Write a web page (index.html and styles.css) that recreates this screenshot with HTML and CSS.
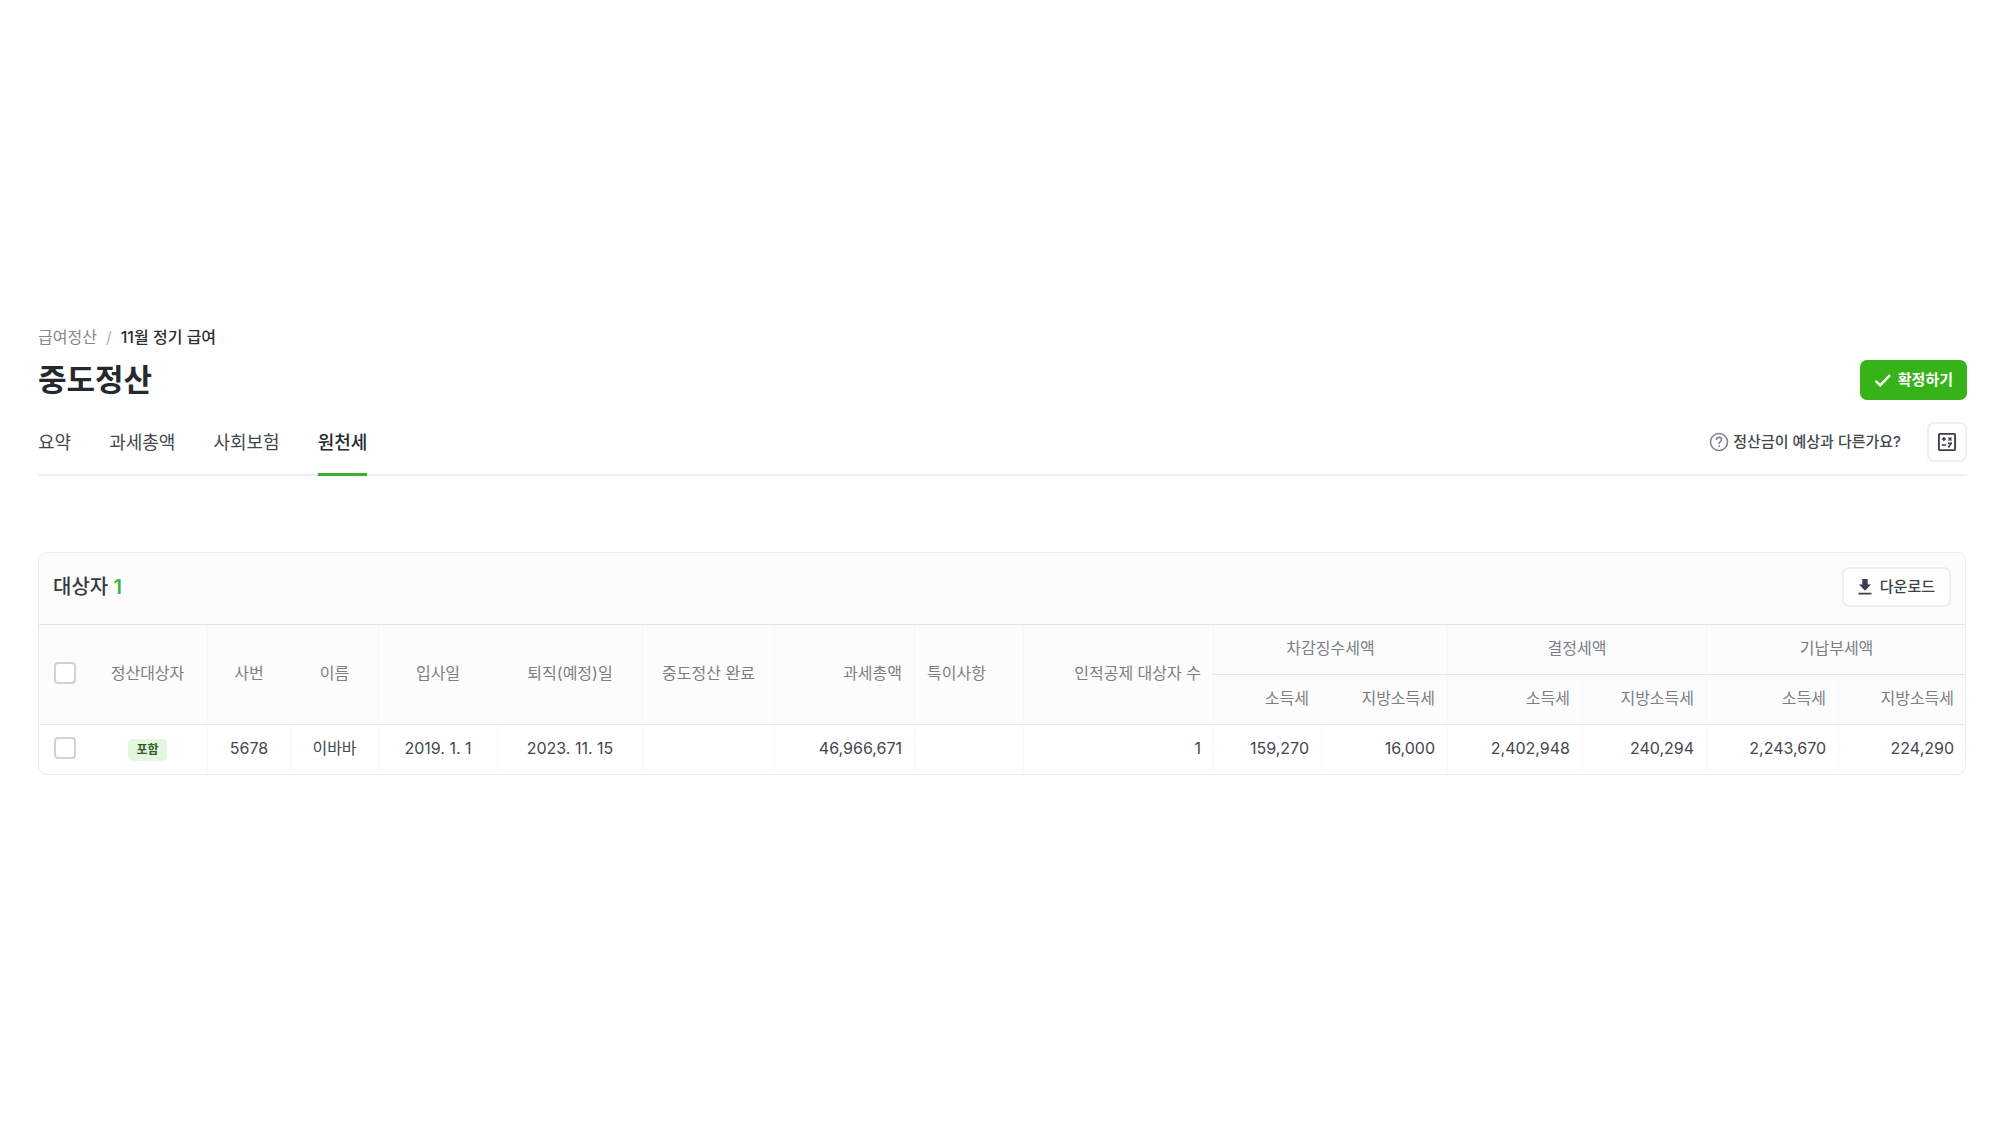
FILE: index.html
```html
<!DOCTYPE html>
<html lang="ko">
<head>
<meta charset="utf-8">
<meta name="viewport" content="width=device-width, initial-scale=1">
<title>중도정산</title>
<link rel="stylesheet" href="styles.css">
</head>
<body>
<main class="page">
  <nav class="breadcrumb" aria-label="경로">
    <a href="#">급여정산</a>
    <span class="slash">/</span>
    <span class="current">11월 정기 급여</span>
  </nav>
  <header class="title-row">
    <h1>중도정산</h1>
    <button class="btn btn-primary" type="button">
      <svg width="18" height="18" viewBox="0 0 18 18" aria-hidden="true"><path d="M1.600 9.800l4.600 4.500L16 4.200" fill="none" stroke="currentColor" stroke-width="2.400"/></svg>
      확정하기
    </button>
  </header>
  <div class="tab-row">
    <nav class="tabs" aria-label="정산 메뉴">
      <a href="#">요약</a>
      <a href="#">과세총액</a>
      <a href="#">사회보험</a>
      <a href="#" class="active" aria-current="page">원천세</a>
    </nav>
    <div class="tools">
      <a class="help" href="#">
        <svg width="20" height="20" viewBox="0 0 20 20" fill="none" stroke="currentColor" stroke-width="1.600" aria-hidden="true"><circle cx="10" cy="10" r="8.500"/><path d="M7.400 8.100c0-1.700 1.100-2.700 2.600-2.700s2.600 1 2.600 2.400c0 1.800-2.500 2-2.500 4.100"/><path d="M10.100 13.200v1.700"/></svg>
        정산금이 예상과 다른가요?
      </a>
      <button class="btn btn-icon" type="button" aria-label="계산기">
        <svg width="20" height="20" viewBox="0 0 20 20" fill="none" stroke="currentColor" aria-hidden="true"><rect x="1.900" y="1.900" width="16.200" height="16.200" rx="1" stroke-width="1.900"/><path d="M4.800 7h4.200M6.900 4.900v4.200M11.500 5.500l3 3M14.500 5.500l-3 3M4.800 13h4.400M11 11.300h4M11.200 14.900l3.400-3.600M11 14.900h2" stroke-width="1.400"/></svg>
      </button>
    </div>
  </div>

  <section class="card">
    <header class="card-head">
      <h2>대상자 <span class="count">1</span></h2>
      <button class="btn btn-outline" type="button">
        <svg width="14" height="18" viewBox="0 0 14 18" fill="currentColor" aria-hidden="true"><path d="M4.300 1h5.400v5.600H13L7 12.800 1 6.600h3.300zM.5 14.800h13v1.600H.5z"/></svg>
        다운로드
      </button>
    </header>
    <table>
      <colgroup>
        <col class="w-check"><col class="w-target"><col class="w-no"><col class="w-name">
        <col class="w-join"><col class="w-leave"><col class="w-done"><col class="w-total">
        <col class="w-note"><col class="w-people"><col class="w-tax-a"><col class="w-local-a">
        <col class="w-tax-b"><col class="w-local-b"><col class="w-tax-c"><col class="w-local-c">
      </colgroup>
      <thead>
        <tr>
          <th rowspan="2" class="check plain"><input type="checkbox" aria-label="전체 선택"></th>
          <th rowspan="2" class="plain">정산대상자</th>
          <th rowspan="2">사번</th>
          <th rowspan="2" class="plain">이름</th>
          <th rowspan="2">입사일</th>
          <th rowspan="2" class="plain">퇴직(예정)일</th>
          <th rowspan="2">중도정산 완료</th>
          <th rowspan="2" class="num">과세총액</th>
          <th rowspan="2" class="left">특이사항</th>
          <th rowspan="2" class="num">인적공제 대상자 수</th>
          <th colspan="2">차감징수세액</th>
          <th colspan="2">결정세액</th>
          <th colspan="2">기납부세액</th>
        </tr>
        <tr>
          <th class="num">소득세</th>
          <th class="num plain">지방소득세</th>
          <th class="num">소득세</th>
          <th class="num">지방소득세</th>
          <th class="num">소득세</th>
          <th class="num">지방소득세</th>
        </tr>
      </thead>
      <tbody>
        <tr>
          <td class="check plain"><input type="checkbox" aria-label="이바바 선택"></td>
          <td class="plain"><span class="badge">포함</span></td>
          <td>5678</td>
          <td>이바바</td>
          <td>2019. 1. 1</td>
          <td>2023. 11. 15</td>
          <td></td>
          <td class="num">46,966,671</td>
          <td class="left"></td>
          <td class="num">1</td>
          <td class="num">159,270</td>
          <td class="num">16,000</td>
          <td class="num">2,402,948</td>
          <td class="num">240,294</td>
          <td class="num">2,243,670</td>
          <td class="num">224,290</td>
        </tr>
      </tbody>
    </table>
  </section>
</main>
</body>
</html>
```
FILE: styles.css
```css
* { box-sizing: border-box; }

body {
  margin: 0;
  background: #fff;
  color: #43474f;
  font-family: Inter, "Noto Sans CJK KR", sans-serif;
  font-size: 16px;
  line-height: 24px;
}

a { color: inherit; text-decoration: none; }
h1, h2 { margin: 0; }
svg { display: block; flex: none; }

.page { padding: 325px 33px 40px 38px; }

/* Page heading */
.breadcrumb { display: flex; gap: 9px; color: #84878d; }
.breadcrumb .slash { color: #b0b3b8; }
.breadcrumb .current { color: #2b2f36; font-weight: 500; }

.title-row {
  display: flex;
  align-items: center;
  justify-content: space-between;
  margin-top: 11px;
}
h1 { color: #24292f; font-size: 31px; line-height: 40px; font-weight: 700; }

/* Buttons */
.btn {
  display: flex;
  align-items: center;
  justify-content: center;
  gap: 6px;
  height: 40px;
  padding: 0 14px;
  border: 2px solid #efeff1;
  border-radius: 7px;
  background: #fff;
  color: #3a3f4a;
  font: inherit;
  font-size: 15px;
  font-weight: 500;
}
.btn-primary { border: 0; background: #37b31a; color: #fff; font-weight: 700; }
.btn-icon { width: 40px; padding: 0; }
.btn-outline { gap: 8px; }

/* Tabs */
.tab-row {
  display: flex;
  justify-content: space-between;
  height: 76px;
  border-bottom: 2px solid #efeff0;
}
.tabs { display: flex; gap: 38px; font-size: 18px; }
.tabs a {
  padding-top: 31px;
  margin-bottom: -2px;
  border-bottom: 3px solid transparent;
}
.tabs .active { border-color: #3bb02c; color: #24292f; font-weight: 500; }
.tools { display: flex; align-items: center; gap: 26px; padding-top: 10px; }
.help { display: flex; align-items: center; gap: 4px; font-size: 15px; font-weight: 500; }
.help svg { color: #84878d; }

/* Table card */
.card {
  margin: 76px 1px 0 0;
  overflow: hidden;
  border: 1px solid #ececee;
  border-radius: 9px;
}
.card-head {
  display: flex;
  align-items: center;
  justify-content: space-between;
  height: 72px;
  padding: 0 14px 4px;
  border-bottom: 1px solid #e6e6e8;
  background: #fcfcfc;
}
h2 { color: #363a42; font-size: 20px; line-height: 24px; font-weight: 500; }
.count { color: #3bb53b; font-weight: 600; }

table { width: 100%; table-layout: fixed; border-collapse: separate; border-spacing: 0; }
th, td {
  height: 49px;
  padding: 0 12px 3px;
  border-left: 1px solid #f7f7f9;
  text-align: center;
  white-space: nowrap;
}
th {
  height: 50px;
  border-bottom: 1px solid #e6e6e8;
  background: #fcfcfc;
  color: #7b7e86;
  font-weight: 400;
}
.plain { border-left-color: transparent; }
.check { padding: 0 14px 3px; text-align: left; }
.left { text-align: left; }
.num { text-align: right; }

input[type="checkbox"] {
  display: block;
  width: 22px;
  height: 22px;
  margin: 0;
  appearance: none;
  border: 2px solid #d2d2d4;
  border-radius: 4px;
  background: #fff;
}

.badge {
  display: inline-block;
  padding: 0 8px;
  border-radius: 5px;
  background: #e4f6df;
  color: #2f5a26;
  font-size: 12px;
  line-height: 22px;
  font-weight: 700;
}

.w-check { width: 48px; }
.w-target { width: 120px; }
.w-no { width: 83px; }
.w-name { width: 88px; }
.w-join { width: 119px; }
.w-leave { width: 145px; }
.w-done { width: 132px; }
.w-total { width: 140px; }
.w-note { width: 109px; }
.w-people { width: 190px; }
.w-tax-a { width: 108px; }
.w-local-a { width: 126px; }
.w-tax-b { width: 135px; }
.w-local-b { width: 124px; }
.w-tax-c { width: 132px; }
.w-local-c { width: 128px; }
```
